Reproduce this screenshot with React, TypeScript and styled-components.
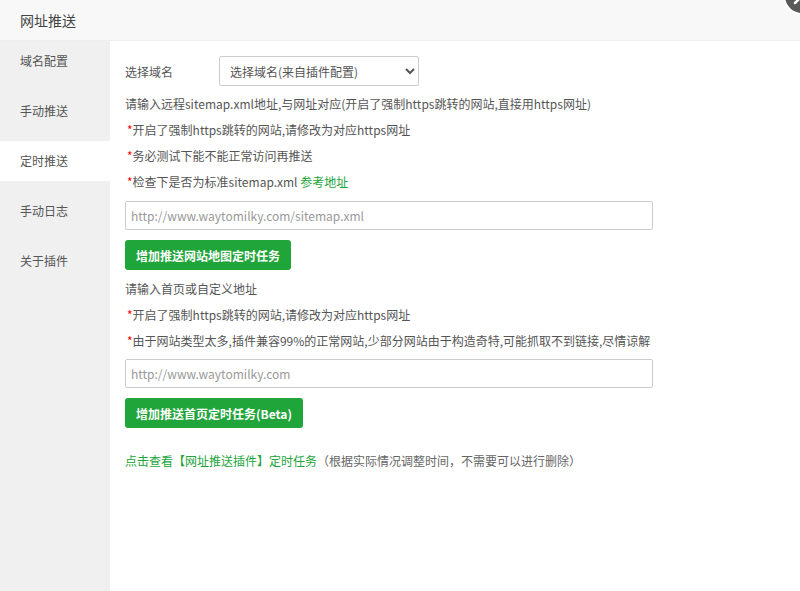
import React from "react";
import styled, { createGlobalStyle } from "styled-components";

const Global = createGlobalStyle`
  html, body { margin: 0; padding: 0; background: #fff; }
  body { font-family: "Microsoft YaHei", "Noto Sans CJK SC", sans-serif; font-size: 12px; color: #555; }
  * { box-sizing: border-box; }
`;

const Page = styled.div`
  position: relative;
  width: 800px;
  height: 591px;
  display: flex;
  flex-direction: column;
  overflow: hidden;
  background: #fff;
`;

const Header = styled.div`
  height: 41px;
  flex: none;
  background: #f8f8f8;
  border-bottom: 1px solid #eee;
  padding-left: 20px;
  display: flex;
  align-items: center;
  font-size: 14px;
  color: #444;
`;

const Close = styled.svg`
  position: absolute;
  z-index: 5;
  right: -22px;
  top: -24px;
  width: 40px;
  height: 40px;
`;

const Body = styled.div`
  flex: 1;
  display: flex;
`;

const Side = styled.nav`
  width: 110px;
  flex: none;
  background: #f0f0f0;
  display: flex;
  flex-direction: column;
  gap: 10px;
`;

const SideItem = styled.div<{ $active?: boolean }>`
  height: 40px;
  line-height: 40px;
  padding-left: 20px;
  font-size: 12px;
  color: #555;
  background: ${(p) => (p.$active ? "#fff" : "transparent")};
`;

const Main = styled.div`
  flex: 1;
  padding: 15px 0 0 15px;
  display: flex;
  flex-direction: column;
  align-items: flex-start;
`;

const Row = styled.div`
  display: flex;
  align-items: center;
  height: 30px;
  margin-bottom: 5px;
`;

const Label = styled.span`
  width: 94px;
  color: #555;
`;

const Select = styled.select`
  width: 200px;
  height: 30px;
  border: 1px solid #ccc;
  border-radius: 2px;
  background: #fff;
  padding-left: 6px;
  font-family: inherit;
  font-size: 12px;
  color: #555;
  outline: none;
`;

const Line = styled.div`
  height: 26px;
  line-height: 26px;
  color: #555;
  white-space: nowrap;
`;

const Star = styled.span`
  color: #f00;
  margin-left: 2px;
`;

const Green = styled.a`
  color: #20a53a;
  text-decoration: none;
`;

const Input = styled.input<{ $mt: number }>`
  width: 528px;
  height: 29px;
  margin-top: ${(p) => p.$mt}px;
  border: 1px solid #ccc;
  border-radius: 2px;
  padding: 0 5px;
  font-family: inherit;
  font-size: 12px;
  color: #555;
  outline: none;
  &::placeholder { color: #999; }
`;

const Button = styled.button<{ $mb: number }>`
  margin-top: 10px;
  margin-bottom: ${(p) => p.$mb}px;
  height: 30px;
  padding: 0 11px;
  border: none;
  border-radius: 3px;
  background: #20a53a;
  color: #fff;
  font-family: inherit;
  font-size: 12px;
  font-weight: bold;
`;

const Note = styled.span`
  color: #666;
`;

export default function App() {
  return (
    <Page>
      <Global />
      <Header>网址推送</Header>
      <Close viewBox="0 0 40 40">
        <circle cx="20" cy="20" r="18" fill="#595959" stroke="#fff" strokeWidth="2" />
        <path d="M13 13 L27 27 M27 13 L13 27" stroke="#fff" strokeWidth="2.5" strokeLinecap="round" />
      </Close>
      <Body>
        <Side>
          <SideItem>域名配置</SideItem>
          <SideItem>手动推送</SideItem>
          <SideItem $active>定时推送</SideItem>
          <SideItem>手动日志</SideItem>
          <SideItem>关于插件</SideItem>
        </Side>
        <Main>
          <Row>
            <Label>选择域名</Label>
            <Select defaultValue="a">
              <option value="a">选择域名(来自插件配置)</option>
            </Select>
          </Row>
          <Line>请输入远程sitemap.xml地址,与网址对应(开启了强制https跳转的网站,直接用https网址)</Line>
          <Line><Star>*</Star>开启了强制https跳转的网站,请修改为对应https网址</Line>
          <Line><Star>*</Star>务必测试下能不能正常访问再推送</Line>
          <Line><Star>*</Star>检查下是否为标准sitemap.xml <Green href="#">参考地址</Green></Line>
          <Input $mt={6} placeholder="http://www.waytomilky.com/sitemap.xml" />
          <Button $mb={6}>增加推送网站地图定时任务</Button>
          <Line>请输入首页或自定义地址</Line>
          <Line><Star>*</Star>开启了强制https跳转的网站,请修改为对应https网址</Line>
          <Line><Star>*</Star>由于网站类型太多,插件兼容99%的正常网站,少部分网站由于构造奇特,可能抓取不到链接,尽情谅解</Line>
          <Input $mt={5} placeholder="http://www.waytomilky.com" />
          <Button $mb={20}>增加推送首页定时任务(Beta)</Button>
          <Line>
            <Green href="#">点击查看【网址推送插件】定时任务</Green>
            <Note>（根据实际情况调整时间，不需要可以进行删除）</Note>
          </Line>
        </Main>
      </Body>
    </Page>
  );
}
